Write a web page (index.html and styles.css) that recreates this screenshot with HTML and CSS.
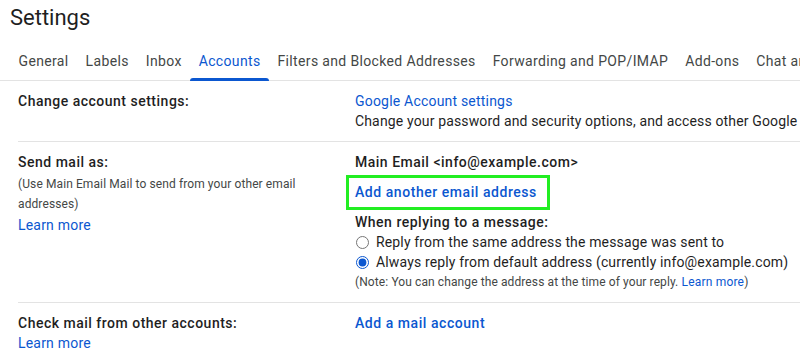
FILE: index.html
```html
<!DOCTYPE html>
<html lang="en">
<head>
<meta charset="utf-8">
<title>Settings</title>
<link rel="stylesheet" href="styles.css">
</head>
<body>
<div class="page">
  <h1 class="title">Settings</h1>
  <nav class="tabs">
    <span class="tab">General</span>
    <span class="tab">Labels</span>
    <span class="tab">Inbox</span>
    <span class="tab active">Accounts</span>
    <span class="tab">Filters and Blocked Addresses</span>
    <span class="tab">Forwarding and POP/IMAP</span>
    <span class="tab">Add-ons</span>
    <span class="tab">Chat and Meet</span>
  </nav>

  <section class="row">
    <div class="label-col">
      <div class="label">Change account settings:</div>
    </div>
    <div class="value-col">
      <a class="link">Google Account settings</a>
      <div class="text">Change your password and security options, and access other Google services.</div>
    </div>
  </section>

  <section class="row">
    <div class="label-col">
      <div class="label">Send mail as:</div>
      <div class="small">(Use Main Email Mail to send from your other email addresses)</div>
      <a class="link">Learn more</a>
    </div>
    <div class="value-col">
      <div class="label">Main Email &lt;info@example.com&gt;</div>
      <div class="spaced"><a class="strong-link highlighted">Add another email address</a></div>
      <div class="label spaced">When replying to a message:</div>
      <label class="radio"><input type="radio" name="reply"><span>Reply from the same address the message was sent to</span></label>
      <label class="radio"><input type="radio" name="reply" checked><span>Always reply from default address (currently info@example.com)</span></label>
      <div class="small">(Note: You can change the address at the time of your reply. <a class="link">Learn more</a>)</div>
    </div>
  </section>

  <section class="row">
    <div class="label-col">
      <div class="label">Check mail from other accounts:</div>
      <a class="link">Learn more</a>
    </div>
    <div class="value-col">
      <a class="strong-link">Add a mail account</a>
    </div>
  </section>
</div>
</body>
</html>
```

FILE: styles.css
```css
* { box-sizing: border-box; }

html, body {
  margin: 0;
  background: #ffffff;
}

body {
  font-family: Roboto, "Noto Sans", "DejaVu Sans", sans-serif;
  color: #1f1f1f;
  font-size: 14px;
  letter-spacing: 0.15px;
}

.page {
  width: 800px;
  height: 360px;
  overflow: hidden;
}

.title {
  margin: 0;
  padding: 4px 10px 0;
  height: 42px;
  font-size: 22px;
  line-height: 28px;
  font-weight: 400;
  letter-spacing: 0;
  color: #1f1f1f;
}

.tabs {
  display: flex;
  padding: 0 10px;
  border-bottom: 1px solid #e3e3e3;
  white-space: nowrap;
}

.tab {
  position: relative;
  flex: none;
  padding: 0 8.5px;
  line-height: 38px;
  font-size: 14px;
  letter-spacing: 0.35px;
  color: #444746;
}

.tab.active {
  color: #0b57d0;
}

.tab.active::after {
  content: "";
  position: absolute;
  left: 0;
  right: 0;
  bottom: -1px;
  height: 3px;
  background: #0b57d0;
  border-radius: 3px 3px 0 0;
}

.row {
  display: grid;
  grid-template-columns: 337px 1fr;
  margin-left: 18px;
  padding: 10px 0;
  border-bottom: 1px solid #e3e3e3;
}

.row:last-child {
  border-bottom: none;
}

.label-col, .value-col {
  display: flex;
  flex-direction: column;
  align-items: flex-start;
  min-width: 0;
}

.value-col {
  white-space: nowrap;
}

.label {
  font-weight: 500;
  line-height: 20px;
  letter-spacing: 0.5px;
  color: #1f1f1f;
}

.text {
  line-height: 20px;
  color: #1f1f1f;
}

.small {
  font-size: 12px;
  line-height: 20px;
  letter-spacing: 0.1px;
  color: #444746;
}

.label-col .small {
  white-space: normal;
  max-width: 290px;
  margin-top: 2px;
}

.label-col .small + .link {
  margin-top: 1px;
}

.link {
  color: #0b57d0;
  line-height: 20px;
  letter-spacing: 0.2px;
  cursor: pointer;
}

.strong-link {
  color: #0b57d0;
  font-weight: 500;
  line-height: 20px;
  letter-spacing: 0.55px;
  cursor: pointer;
  display: inline-block;
}

.spaced {
  margin-top: 10px;
}

.highlighted {
  position: relative;
}

.highlighted::after {
  content: "";
  position: absolute;
  left: -9px;
  right: -13px;
  top: -7px;
  bottom: -8px;
  border: 3px solid #22ee22;
}

.radio {
  display: flex;
  align-items: center;
  line-height: 20px;
  color: #1f1f1f;
}

.radio input {
  margin: 0 7px 0 1px;
  width: 13px;
  height: 13px;
  accent-color: #0b57d0;
}
```
